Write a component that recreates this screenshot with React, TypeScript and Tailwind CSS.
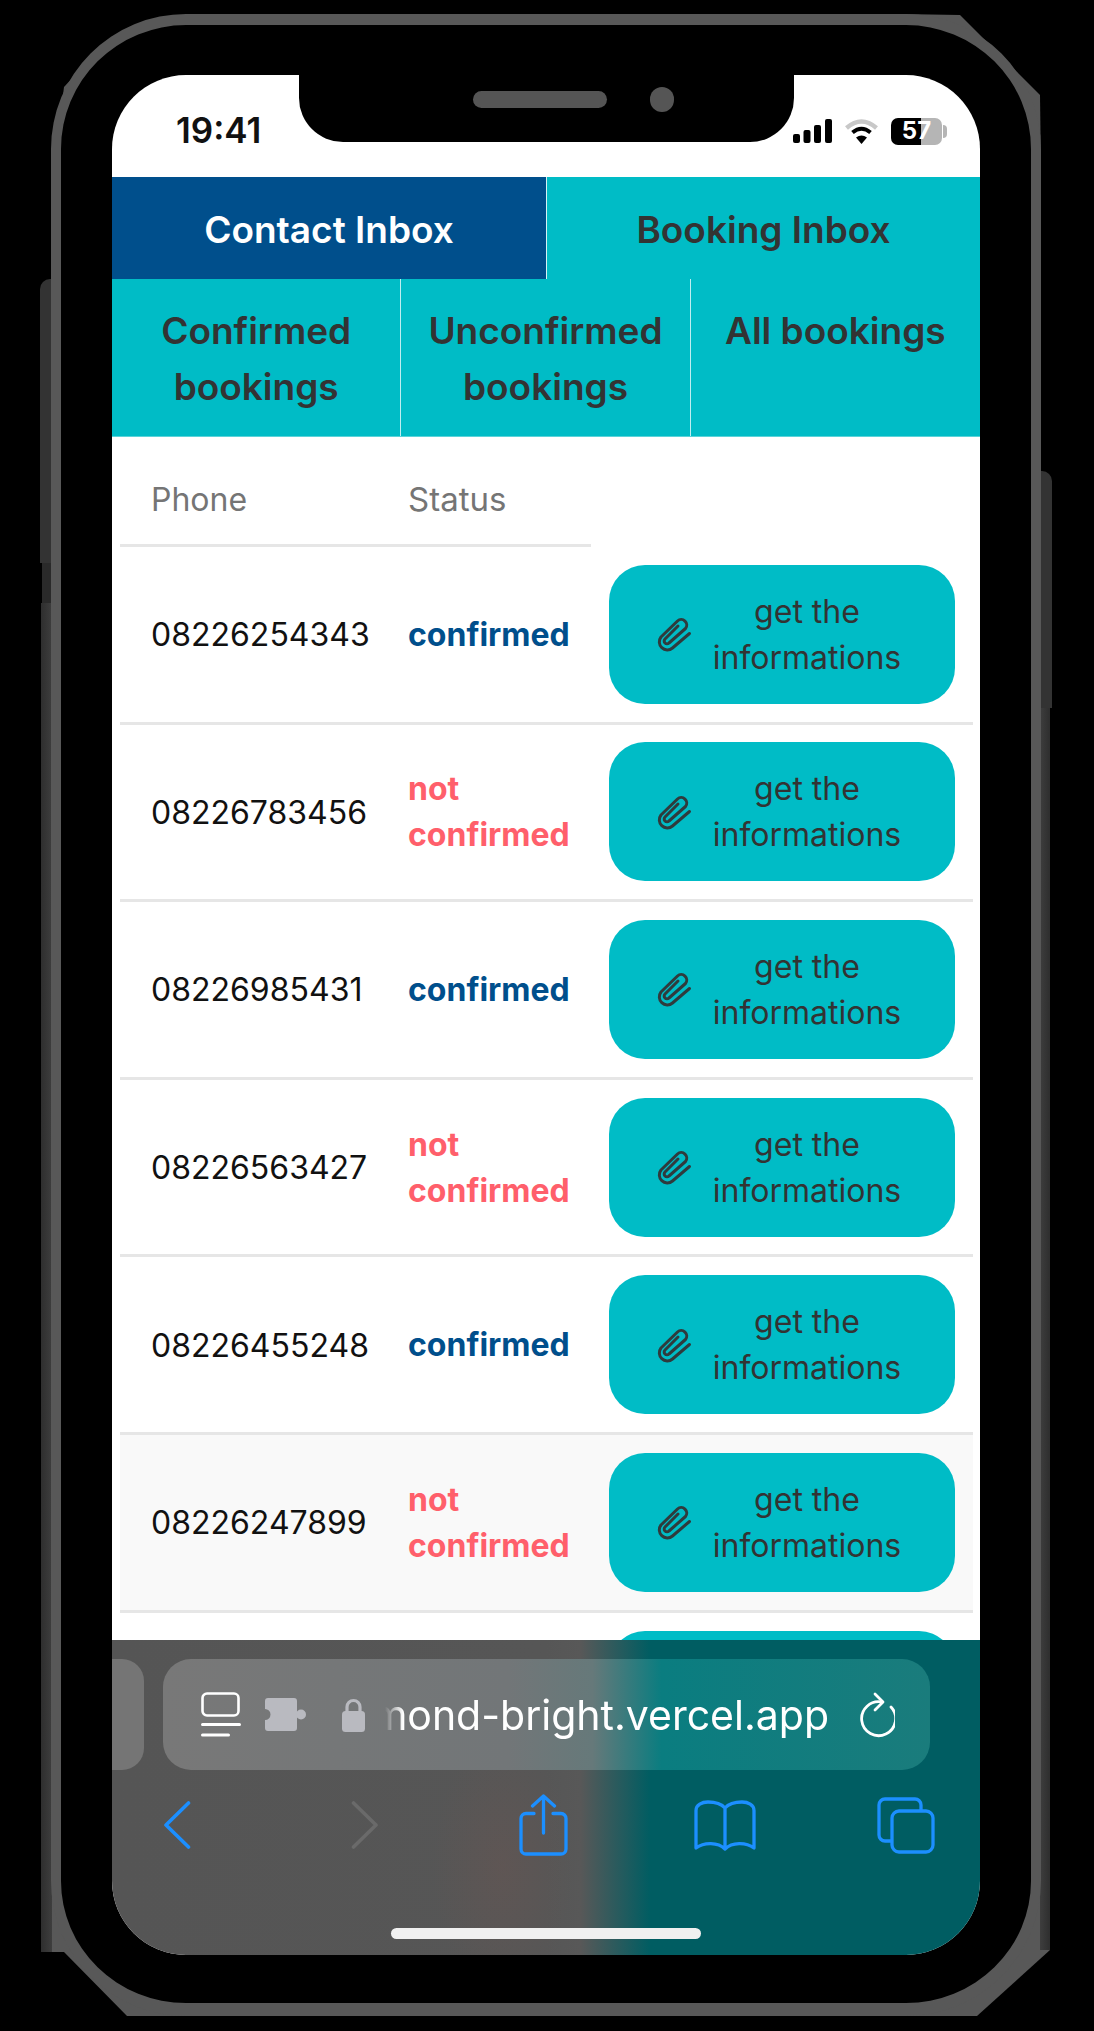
const rows = [
  { phone: "08226254343", confirmed: true },
  { phone: "08226783456", confirmed: false },
  { phone: "08226985431", confirmed: true },
  { phone: "08226563427", confirmed: false },
  { phone: "08226455248", confirmed: true },
  { phone: "08226247899", confirmed: false },
];

function PaperclipIcon() {
  return (
    <svg width="36" height="36" viewBox="-1 -1 36 36" fill="none" stroke="#2f3b3d" strokeWidth="3" strokeLinecap="round" strokeLinejoin="round" className="shrink-0">
      <path d="M32.5 16.5 15.5 31a8 8 0 0 1-11.5-11L20.5 4a5.5 5.5 0 0 1 8 7.5L12 26a2.8 2.8 0 0 1-4-4L21 9" />
    </svg>
  );
}

function SignalIcon() {
  return (
    <svg width="39" height="24" viewBox="0 0 39 24" fill="#000">
      <rect x="0" y="15" width="7" height="9" rx="2" />
      <rect x="10.5" y="11" width="7" height="13" rx="2" />
      <rect x="21" y="6" width="7" height="18" rx="2" />
      <rect x="32" y="0" width="7" height="24" rx="2" />
    </svg>
  );
}

function WifiIcon() {
  return (
    <svg width="35" height="26" viewBox="0 0 35 26" fill="none">
      <path d="M2.5 10Q17.5-3 32.5 10" stroke="#c8c8c8" strokeWidth="4.5" />
      <path d="M8.5 14.5Q17.5 7 26.5 14.5" stroke="#000" strokeWidth="4" />
      <path d="M12 19.5Q17.5 15.5 23 19.5L17.5 26Z" fill="#000" />
    </svg>
  );
}

function ReaderIcon() {
  return (
    <svg width="40" height="46" viewBox="0 0 40 46" fill="none" stroke="#fff" strokeLinecap="round">
      <rect x="1.5" y="1.5" width="36" height="22" rx="4.5" strokeWidth="2.6" />
      <path d="M1.5 32.5h37M1.5 43h26" strokeWidth="3" />
    </svg>
  );
}

function PuzzleIcon() {
  return (
    <svg width="41" height="33" viewBox="0 0 41 33" fill="#b9bac0">
      <path d="M3 0h26a3 3 0 0 1 3 3v27a3 3 0 0 1-3 3H3a3 3 0 0 1-3-3v-8a5.5 5.5 0 0 0 0-11V3a3 3 0 0 1 3-3Z" />
      <circle cx="36" cy="16.5" r="5" />
    </svg>
  );
}

function LockIcon() {
  return (
    <svg width="23" height="34" viewBox="0 0 23 34" fill="none">
      <path d="M5 15V9a6.5 6.5 0 0 1 13 0v6" stroke="#b9bac0" strokeWidth="3.2" />
      <rect x="0" y="13" width="23" height="21" rx="3.5" fill="#b9bac0" />
    </svg>
  );
}

function ReloadIcon() {
  return (
    <svg width="38" height="46" viewBox="0 0 38 46" fill="none" stroke="#fff" strokeWidth="2.8" strokeLinecap="round" strokeLinejoin="round">
      <path d="M25 10A17 17 0 1 0 34 15" />
      <path d="M18 2l8 8-8 8" />
    </svg>
  );
}

function BackIcon({ flip, color }: { flip?: boolean; color: string }) {
  return (
    <svg width="27" height="48" viewBox="0 0 27 48" fill="none" stroke={color} strokeWidth="3.6" strokeLinecap="round" strokeLinejoin="round">
      <path d={flip ? "M2.5 2 25 24 2.5 46" : "M24.5 2 2 24l22.5 22"} />
    </svg>
  );
}

function ShareIcon() {
  return (
    <svg width="49" height="62" viewBox="0 0 49 62" fill="none" stroke="#1c8fff" strokeWidth="3.3" strokeLinecap="round" strokeLinejoin="round">
      <path d="M15 19.5H7a5 5 0 0 0-5 5V55a5 5 0 0 0 5 5h35a5 5 0 0 0 5-5V24.5a5 5 0 0 0-5-5h-8" />
      <path d="M24.5 39V2M13.5 12l11-10 11 10" />
    </svg>
  );
}

function BookIcon() {
  return (
    <svg width="62" height="51" viewBox="0 0 62 51" fill="none" stroke="#1c8fff" strokeWidth="3.3" strokeLinecap="round" strokeLinejoin="round">
      <path d="M31 8C27 3.5 21 2 14 2 8 2 2 5 2 10.5V48c8-6 22-6 29 1 7-7 21-7 29-1V10.5C60 5 54 2 48 2c-7 0-13 1.5-17 6Zm0 0v41" />
    </svg>
  );
}

function TabsIcon() {
  return (
    <svg width="58" height="57" viewBox="0 0 58 57" fill="none" stroke="#1c8fff" strokeWidth="3.3" strokeLinejoin="round">
      <path d="M44 14V8a6 6 0 0 0-6-6H8a6 6 0 0 0-6 6v30a6 6 0 0 0 6 6h6" />
      <rect x="15" y="14" width="41" height="41" rx="7" />
    </svg>
  );
}

export default function App() {
  return (
    <div className="relative w-[1094px] h-[2031px] bg-black overflow-hidden pt-[14px] pl-[51px] font-['Inter',sans-serif]">
      {/* corner chamfers and side buttons of the device mockup */}
      <svg width="1094" height="2031" viewBox="0 0 1094 2031" className="absolute left-0 top-0">
        <polygon points="64,87 100,48 60,120" fill="#585858" />
        <polygon points="900,14 960,15 1040,95 1041,170" fill="#585858" />
        <polygon points="52,1880 52,1952 64,1952 127,2016 200,2016" fill="#585858" />
        <polygon points="1041,1880 1050,1950 977,2016 900,2016" fill="#585858" />
      </svg>
      <div className="absolute left-[40px] top-[279px] w-[12px] h-[284px] rounded-tl-[10px] bg-[#333333]" />
      <div className="absolute left-[42px] top-[563px] w-[10px] h-[40px] bg-[#2a2a2a]" />
      <div className="absolute left-[41px] top-[603px] w-[11px] h-[1349px] bg-gradient-to-r from-[#2e2e2e] to-[#3e3e3e]" />
      <div className="absolute left-[1040px] top-[471px] w-[12px] h-[237px] rounded-tr-[10px] bg-[#333333]" />
      <div className="absolute left-[1040px] top-[708px] w-[10px] h-[1242px] bg-gradient-to-l from-[#2e2e2e] to-[#3e3e3e]" />

      <div className="relative w-[990px] h-[2002px] bg-black rounded-[135px] border-x-[10px] border-t-[11px] border-b-[13px] border-[#585858] pl-[51px] pt-[50px]">
        <div className="relative flex flex-col w-[868px] h-[1880px] rounded-[74px] overflow-hidden bg-white">
          {/* status bar */}
          <div className="flex items-center h-[102px] shrink-0 pl-[64px] pb-[7px] pt-[17px]">
            <span className="w-[617px] -mt-[3px] text-[35px] leading-[40px] font-semibold text-[#111]">19:41</span>
            <SignalIcon />
            <span className="ml-[12px]"><WifiIcon /></span>
            <span className="relative ml-[12px] flex w-[51px] h-[27px] rounded-[7px] overflow-hidden">
              <span className="w-[30px] bg-black" />
              <span className="w-[21px] bg-[#b5b5b5]" />
              <span className="absolute inset-0 flex items-center justify-center text-[24px] leading-none font-bold text-white">57</span>
            </span>
            <span className="ml-[1px] w-[4px] h-[13px] rounded-r-full bg-[#b5b5b5]" />
          </div>
          <div className="absolute left-[187px] top-0 w-[495px] h-[67px] bg-black rounded-b-[44px]">
            <div className="absolute left-[174px] top-[16px] w-[134px] h-[17px] rounded-full bg-[#555555]" />
            <div className="absolute left-[351px] top-[12px] w-[24px] h-[25px] rounded-full bg-[#555555]" />
          </div>

          {/* inbox tabs */}
          <div className="flex h-[102px] shrink-0 text-[37px] font-semibold">
            <div className="w-[434px] flex items-center justify-center pt-[3px] bg-[#004f8c] text-white">Contact Inbox</div>
            <div className="flex-1 flex items-center justify-center pt-[3px] bg-[#00bcc6] text-[#333] border-l-[1.5px] border-[#d5f3f5]">Booking Inbox</div>
          </div>
          <div className="grid grid-cols-3 h-[158px] shrink-0 bg-[#00bcc6] text-[#333] text-[37px] leading-[55.5px] font-semibold text-center border-b border-[#5ad3d9]">
            <div className="pt-[24px] border-r border-[#bfeef1]">Confirmed<br />bookings</div>
            <div className="pt-[24px] border-r border-[#bfeef1]">Unconfirmed<br />bookings</div>
            <div className="pt-[24px]">All bookings</div>
          </div>

          {/* booking table */}
          <div className="flex-1 overflow-hidden pl-[8px] pr-[7px]">
            <div className="flex items-center w-[471px] h-[110px] pt-[18px] border-b-[3px] border-[#e6e6e6] text-[32px] text-[#757575]">
              <span className="w-[288px] pl-[31px]">Phone</span>
              <span className="text-[33px]">Status</span>
            </div>
            {rows.map((row, i) => (
              <div key={row.phone} className={`flex items-center h-[177.6px] border-b-[3px] border-[#e6e6e6] ${i === 5 ? "bg-[#f9f9f9]" : ""}`}>
                <span className="w-[288px] pl-[31px] pt-[2px] text-[32px] text-[#111]">{row.phone}</span>
                <span className={`w-[201px] pt-[1px] text-[32px] leading-[46px] font-bold ${row.confirmed ? "text-[#004f8c]" : "text-[#ff5f6b]"}`}>
                  {row.confirmed ? "confirmed" : <>not<br />confirmed</>}
                </span>
                <button className="flex items-center w-[346px] h-[139px] rounded-[36px] bg-[#00bcc6] pl-[47px] text-[32px] leading-[46px] text-[#333]">
                  <PaperclipIcon />
                  <span className="ml-[13px] w-[204px] pt-[1px] text-center">get the<br />informations</span>
                </button>
              </div>
            ))}
            <div className="ml-[1px] pt-[18px] pl-[488px]">
              <div className="w-[346px] h-[139px] rounded-[36px] bg-[#00bcc6]" />
            </div>
          </div>

          {/* safari toolbar */}
          <div className="shrink-0 h-[315px] pt-[19px] bg-[radial-gradient(ellipse_70px_130px_at_45%_72%,rgba(115,85,80,0.3),transparent),linear-gradient(90deg,#555555_0%,#565656_50%,#585858_54%,#005d62_62%,#005d62_100%)]">
            <div className="flex items-center h-[111px] gap-[19px]">
              <div className="w-[32px] h-full rounded-r-[22px] bg-[#757575]" />
              <div className="flex items-center w-[767px] h-full rounded-[28px] pl-[38px] bg-[linear-gradient(90deg,#787878_0%,#727678_45%,#66797a_56%,#0a7d80_65%,#1a7c7c_100%)]">
                <ReaderIcon />
                <span className="ml-[24px]"><PuzzleIcon /></span>
                <span className="ml-[36px]"><LockIcon /></span>
                <div className="ml-[20px] flex justify-end w-[444px] overflow-hidden [mask-image:linear-gradient(90deg,transparent,black_18px)]">
                  <span className="shrink-0 text-[41px] leading-[50px] text-white">mond-bright.vercel.app</span>
                </div>
                <span className="ml-[28px]"><ReloadIcon /></span>
              </div>
            </div>
            <div className="flex items-center h-[62px] mt-[24px] pl-[52px]">
              <BackIcon color="#1c8fff" />
              <span className="ml-[160px]"><BackIcon flip color="#6a6a6a" /></span>
              <span className="ml-[141px]"><ShareIcon /></span>
              <span className="ml-[126px]"><BookIcon /></span>
              <span className="ml-[121px]"><TabsIcon /></span>
            </div>
            <div className="mx-auto mt-[72px] w-[310px] h-[11px] rounded-full bg-[#f0f0f0]" />
          </div>
        </div>
      </div>
    </div>
  );
}
